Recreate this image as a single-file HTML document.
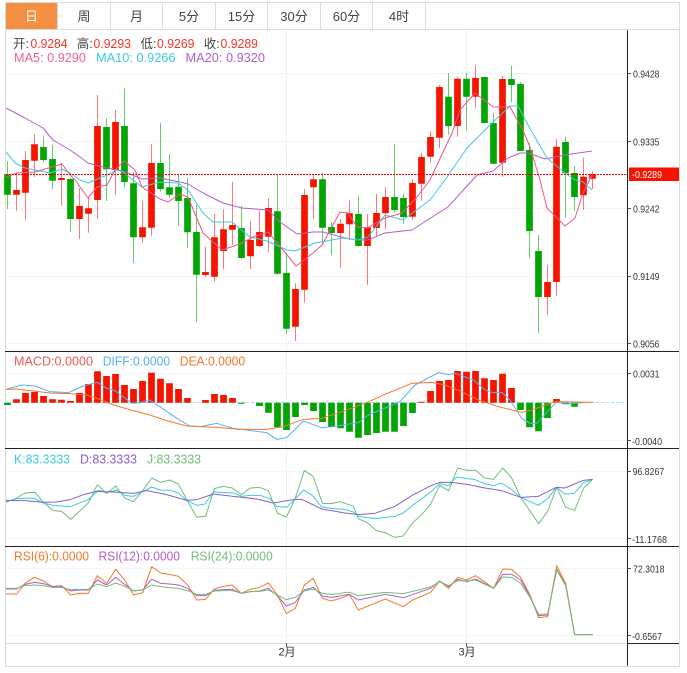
<!DOCTYPE html>
<html><head><meta charset="utf-8"><style>
html,body{margin:0;padding:0;background:#fff;width:687px;height:673px;overflow:hidden}
svg{display:block}
text{font-family:"Liberation Sans","Noto Sans CJK SC",sans-serif}
.t{font-size:13px;fill:#444;text-anchor:middle}
.a{font-size:10.5px;fill:#333}
</style></head><body>
<svg width="687" height="673" viewBox="0 0 687 673" xmlns="http://www.w3.org/2000/svg">
<rect width="687" height="673" fill="#fff"/>
<!-- grid -->
<g fill="none" stroke-width="1">
<path stroke="#edf2f5" d="M6 73.5H628M6 141.5H628M6 208.5H628M6 276.5H628M6 343.5H628M286.5 30V643M466.5 30V643"/>
<path stroke="#f4f6f8" d="M6 373.5H628M6 440.5H628M6 471.5H628M6 538.5H628M6 568.5H628M6 635.5H628"/>
</g>
<!-- tab bar -->
<rect x="6" y="3" width="51.5" height="26" fill="#f58f42"/>
<path fill="none" stroke="#dcdcdc" stroke-width="1" d="M5.5 2.5H679.5V666.5H5.5ZM5.5 29.5H679.5M57.5 3V29M110.5 3V29M162.5 3V29M215.5 3V29M267.5 3V29M320.5 3V29M372.5 3V29M425.5 3V29M6 643.5H628"/>
<text class="t" x="31.5" y="21" style="fill:#fff">日</text>
<text class="t" x="84" y="21">周</text>
<text class="t" x="136.5" y="21">月</text>
<text class="t" x="189" y="21">5分</text>
<text class="t" x="241.5" y="21">15分</text>
<text class="t" x="294" y="21">30分</text>
<text class="t" x="346.5" y="21">60分</text>
<text class="t" x="399" y="21">4时</text>
<!-- wicks -->
<g fill="none" stroke-width="1">
<path stroke="#f77" d="M16.5 172V211M25.5 151V220M34.5 134V177M61.5 163V205.7M79.5 188V239M88.5 197V232.7M97.5 95V219M115.5 110V195M142.5 201V242.7M151.5 144.3V235.7M205.5 246.7V277.3M214.5 214V281.7M223.5 209.3V269M232.5 181.7V245M250.5 221V269.3M259.5 210.7V247M268.5 198.3V252M295.5 283.3V341M304.5 189V302.7M313.5 174V219M340.5 219V267.7M349.5 200.7V240M367.5 214.3V285M376.5 194V236.7M385.5 187.3V229M412.5 179.3V220M421.5 153.3V200.7M430.5 131.3V163M439.5 85V148.3M457.5 77V136.7M475.5 65V108M502.5 76V176.7M547.5 265V315M556.5 139V295.7M583.5 157.7V210M592.5 171.3V189"/>
<path stroke="#6c6" d="M7.5 161V209M43.5 136.7V162M52.5 145V189M70.5 178V232M106.5 118V200.7M124.5 88V187.7M133.5 172V262.7M160.5 123V191.7M169.5 154V197.7M178.5 175V226M187.5 178V248M196.5 205V322.3M241.5 206V259.3M277.5 175V275M286.5 252.7V334M322.5 173V245M331.5 221.7V255M358.5 196V247M394.5 144V213M403.5 194V224M448.5 73V134.7M466.5 73V130M493.5 113V163.7M511.5 65.7V102M520.5 82V151M529.5 143.3V257.7M538.5 235V333M565.5 136.7V217.7M574.5 166V210.7"/>
</g>
<!-- bodies -->
<g fill="none" stroke-width="6.7">
<path stroke="#f51400" d="M16.5 190V194.7M25.5 160V192.7M34.5 144.3V160.7M61.5 178V180M79.5 206V219M88.5 208.3V213.7M97.5 126V200M115.5 122V170M142.5 227.3V237.3M151.5 163V227.7M205.5 272V275M214.5 237.3V276.7M223.5 229.3V251M232.5 225V229.7M250.5 240V256.3M259.5 232V246M268.5 208V236.7M295.5 289V326.7M304.5 195V289.7M313.5 179.3V187.3M340.5 223.7V233M349.5 213.3V224.3M367.5 227.3V246M376.5 213V228M385.5 197V213.3M412.5 183V216.7M421.5 157V183.7M430.5 137V156.7M439.5 87V137.7M457.5 78.7V126M475.5 78V96.7M502.5 79V162.7M547.5 282V297M556.5 146.7V282M583.5 176.7V195.3M592.5 174V178.7"/>
<path stroke="#03a503" d="M7.5 174.3V194.7M43.5 147V160M52.5 159V180.7M70.5 179V219M106.5 127V169.3M124.5 126V182M133.5 183.3V237.3M160.5 163V189M169.5 187.3V194.7M178.5 186.7V201M187.5 198V232.3M196.5 232V274.7M241.5 228V258M277.5 211.3V273.7M286.5 273V328.7M322.5 179.3V227.7M331.5 227V233M358.5 214V246M394.5 197V210M403.5 198V217M448.5 96.7V126M466.5 78.7V96.7M484.5 77V123M493.5 123V163.7M511.5 79V85M520.5 84V151M529.5 150V231M538.5 251V297M565.5 142V173.3M574.5 173V197"/>
</g>
<!-- MA lines -->
<g fill="none" stroke-width="1" stroke-linejoin="round">
<polyline stroke="#b45ec8" points="6,108 25,118 43,128 53,140 70,150 80,157 88,163 107,168 123,171 137,177 142,179 160,178 180,182 188,184 203,193 223,203 242,208 268,210 280,222 297,234 313,232 323,232 345,238 358,240 368,240 385,233 412,230 440,212 448,207 477,175 493,171 508,158 520,153 528,153 545,159 565,155 592,151"/>
<polyline stroke="#3ccbdf" points="6,152 15,163 25,168 35,170 50,173 62,169 70,173 80,180 88,183 107,175 117,170 123,172 142,187 160,182 178,183 188,190 203,213 213,222 232,222 250,237 267,241 287,250 295,251 315,243 343,238 358,240 368,237 385,215 403,220 430,200 445,180 467,148 492,123 510,106 518,106 528,125 547,158 565,173 575,180 583,182 592,190"/>
<polyline stroke="#f0548e" points="6,177 17,173 35,172 62,164 70,175 75,180 88,198 97,187 107,185 115,170 124,161 135,170 142,187 160,199 168,202 180,194 188,197 203,233 222,250 240,244 253,237 268,232 283,250 296,266 313,253 322,245 340,212 348,213 357,227 367,228 385,218 402,213 417,197 430,180 452,133 460,110 475,93 493,107 510,107 522,128 530,147 540,180 547,208 565,226 575,218 583,193 592,175"/>
</g>
<path stroke="#f00" stroke-width="1" stroke-dasharray="2 1" fill="none" d="M6 174.5H628"/>
<!-- MACD bars -->
<path fill="none" stroke="#a6dcf0" stroke-width="1" stroke-dasharray="3 2" d="M6 402.5H625"/>
<g fill="none" stroke-width="6.7">
<path stroke="#f51400" d="M16.5 402.7V399.3M25.5 402.7V393M34.5 402.7V392M43.5 402.7V396M52.5 402.7V399.3M61.5 402.7V399.7M70.5 402.7V401M79.5 402.7V393M88.5 402.7V384M97.5 402.7V371.3M106.5 402.7V376M115.5 402.7V374M124.5 402.7V385M133.5 402.7V389M142.5 402.7V381M151.5 402.7V372.7M160.5 402.7V378.7M169.5 402.7V383.3M178.5 402.7V389M187.5 402.7V398M205.5 402.7V400M214.5 402.7V394M223.5 402.7V395M232.5 402.7V398M421.5 402.7V401.7M430.5 402.7V391M439.5 402.7V381M448.5 402.7V380M457.5 402.7V371M466.5 402.7V371.7M475.5 402.7V371M484.5 402.7V378.3M493.5 402.7V380M502.5 402.7V373.7M511.5 402.7V388M556.5 402.7V399"/>
<path stroke="#03a503" d="M7.5 402.7V405M241.5 402.7V403.7M268.5 402.7V412.7M259.5 402.7V406M277.5 402.7V427.3M286.5 402.7V430M295.5 402.7V417M304.5 402.7V405M313.5 402.7V411M322.5 402.7V422M331.5 402.7V426.7M340.5 402.7V428.3M349.5 402.7V431.7M358.5 402.7V437.7M367.5 402.7V435M376.5 402.7V433M385.5 402.7V431.7M394.5 402.7V431.7M403.5 402.7V426M412.5 402.7V413M520.5 402.7V410M529.5 402.7V427.3M538.5 402.7V431.3M547.5 402.7V418M565.5 402.7V404.3M574.5 402.7V406.7"/>
</g>
<!-- MACD lines -->
<g transform="translate(0,350) scale(.33333)" fill="none" stroke-width="3" stroke-linejoin="round">
<polyline stroke="#58aef5" points="18,118 65,105 105,108 150,125 205,128 250,108 292,97 320,115 345,122 395,160 420,158 450,150 480,170 530,205 570,228 600,230 650,220 700,235 740,240 800,248 830,268 860,263 910,213 965,233 1000,230 1035,224"/>
<polyline stroke="#f5772b" points="18,118 50,117 100,123 150,129 210,131 260,135 300,148 340,165 400,182 450,195 500,212 560,228 650,232 720,238 800,238 850,230 910,208 965,205 1035,182"/>
</g>
<g transform="translate(345,350) scale(.33333)" fill="none" stroke-width="3" stroke-linejoin="round">
<polyline stroke="#58aef5" points="0,224 40,218 70,195 130,170 165,155 210,105 280,68 310,74 330,70 385,90 420,120 445,128 470,127 495,150 530,205 555,220 575,220 635,155 660,162 715,158"/>
<polyline stroke="#f5772b" points="0,182 60,160 120,133 200,100 260,97 300,105 350,125 400,150 460,170 530,187 560,180 630,155 745,157"/>
</g>
<!-- KDJ -->
<g transform="translate(0,448) scale(.33333)" fill="none" stroke-width="3" stroke-linejoin="round">
<polyline stroke="#6fbf73" points="18,163 50,150 75,135 105,133 130,163 160,188 185,190 212,214 265,165 292,110 320,137 347,114 374,150 400,161 428,128 455,90 482,103 510,96 535,108 563,160 590,207 617,205 643,122 670,115 697,120 724,140 751,120 778,118 805,128 832,195 859,208 886,150 913,67 940,86 967,166 994,167 1021,161 1035,166"/>
<polyline stroke="#3ccbdf" points="18,160 50,152 100,150 130,165 160,172 210,176 265,155 295,127 320,133 350,127 375,142 400,145 430,130 455,117 480,126 510,127 535,135 560,157 590,172 615,168 640,132 700,135 725,145 750,142 780,142 810,152 830,175 860,178 885,153 912,126 940,145 965,177 1000,182 1035,184"/>
<polyline stroke="#8a5fc8" points="18,157 75,158 130,163 170,162 210,155 250,140 290,130 340,132 400,136 440,128 500,140 560,157 590,155 640,138 700,145 770,153 820,165 880,155 905,154 965,183 1035,195"/>
</g>
<g transform="translate(345,448) scale(.33333)" fill="none" stroke-width="3" stroke-linejoin="round">
<polyline stroke="#6fbf73" points="0,166 25,175 40,212 67,224 94,248 121,254 148,268 175,264 202,225 230,200 257,168 284,112 311,128 338,60 365,67 392,67 419,90 446,94 473,60 500,90 527,148 581,227 608,190 635,118 662,178 689,187 716,120 743,94"/>
<polyline stroke="#3ccbdf" points="0,184 25,192 40,205 90,212 150,205 175,195 205,170 260,130 283,107 310,113 335,87 390,95 420,107 445,113 470,105 500,125 527,148 580,172 608,152 634,118 660,138 688,136 715,105 743,94"/>
<polyline stroke="#8a5fc8" points="0,195 40,200 90,196 150,175 205,140 260,112 285,103 320,103 370,110 420,120 470,128 527,148 580,145 634,118 660,120 715,97 743,94"/>
</g>
<!-- RSI -->
<g transform="translate(0,545) scale(.33333)" fill="none" stroke-width="3" stroke-linejoin="round">
<polyline stroke="#f5772b" points="18,147 50,147 75,115 103,97 130,108 157,125 185,122 212,150 238,145 265,145 292,92 320,115 347,73 374,105 401,150 428,143 455,65 482,84 509,88 536,94 563,120 590,165 617,163 643,132 670,124 697,120 724,145 751,133 778,128 805,113 832,150 859,206 886,190 913,120 940,100 967,160 994,168 1021,160 1035,155"/>
<polyline stroke="#b45ec8" points="18,132 50,132 75,118 103,112 130,116 157,124 185,124 212,138 238,135 265,135 292,105 320,120 347,97 374,118 401,138 428,135 455,103 482,115 509,117 536,120 563,130 590,152 617,152 643,136 670,134 697,133 724,145 751,140 778,138 805,130 832,152 859,183 886,172 913,135 940,127 967,153 994,157 1021,153 1035,150"/>
<polyline stroke="#6fbf73" points="18,130 50,130 75,122 103,120 130,122 157,127 185,127 212,134 238,133 265,133 292,117 320,125 347,114 374,124 401,137 428,135 455,120 482,125 509,128 536,130 563,137 590,148 617,148 643,138 670,137 697,137 724,145 751,140 778,139 805,135 832,150 859,164 886,157 913,138 940,132 967,145 994,148 1021,146 1035,142"/>
</g>
<g transform="translate(345,545) scale(.33333)" fill="none" stroke-width="3" stroke-linejoin="round">
<polyline stroke="#f5772b" points="0,155 13,148 40,195 121,162 175,185 203,165 257,142 284,108 311,130 338,97 365,105 392,92 446,130 473,72 500,73 527,97 554,148 581,218 608,215 635,62 662,115 689,269 743,269"/>
<polyline stroke="#b45ec8" points="0,150 13,148 40,165 121,148 175,158 257,130 284,108 311,125 338,103 365,110 392,102 446,130 473,88 500,88 527,105 554,152 581,212 608,210 635,72 662,120 689,269 743,269"/>
<polyline stroke="#6fbf73" points="0,142 13,142 40,152 121,142 175,146 257,126 284,110 311,122 338,107 365,108 392,105 446,130 473,96 500,97 527,115 554,155 581,208 608,207 635,75 662,122 689,269 743,269"/>
</g>
<!-- separators and axis -->
<path fill="none" stroke="#222" stroke-width="1" d="M5 351.5H679M5 448.5H679M5 546.5H679M628 643.5H679M627.5 30V666"/>
<path fill="none" stroke="#555" stroke-width="1" d="M628 73.5H631M628 141.5H631M628 208.5H631M628 276.5H631M628 343.5H631M628 373.5H631M628 440.5H631M628 471.5H631M628 538.5H631M628 568.5H631M628 635.5H631M286.5 643V647M466.5 643V647"/>
<!-- price label -->
<rect x="629" y="167.5" width="50" height="13.5" fill="#f51400"/>
<text x="632" y="178.2" fill="#fff" textLength="30" lengthAdjust="spacingAndGlyphs" style="font-size:10.5px">-0.9289</text>
<!-- axis labels -->
<text class="a" x="633" y="77.3" textLength="26.5" lengthAdjust="spacingAndGlyphs">0.9428</text>
<text class="a" x="633" y="145.3" textLength="26.5" lengthAdjust="spacingAndGlyphs">0.9335</text>
<text class="a" x="633" y="212.3" textLength="26.5" lengthAdjust="spacingAndGlyphs">0.9242</text>
<text class="a" x="633" y="279.8" textLength="26.5" lengthAdjust="spacingAndGlyphs">0.9149</text>
<text class="a" x="633" y="347.3" textLength="26.5" lengthAdjust="spacingAndGlyphs">0.9056</text>
<text class="a" x="633" y="377.3" textLength="26.5" lengthAdjust="spacingAndGlyphs">0.0031</text>
<text class="a" x="632" y="444.8" textLength="30" lengthAdjust="spacingAndGlyphs">-0.0040</text>
<text class="a" x="632.7" y="474.8" textLength="31.5" lengthAdjust="spacingAndGlyphs">96.8267</text>
<text class="a" x="632" y="542.8" textLength="35" lengthAdjust="spacingAndGlyphs">-11.1768</text>
<text class="a" x="633" y="572.3" textLength="31.5" lengthAdjust="spacingAndGlyphs">72.3018</text>
<text class="a" x="632" y="639.8" textLength="30" lengthAdjust="spacingAndGlyphs">-0.6567</text>
<text x="287" y="655.5" text-anchor="middle" style="font-size:11px;fill:#333">2月</text>
<text x="467" y="655.5" text-anchor="middle" style="font-size:11px;fill:#333">3月</text>
<!-- legend -->
<g style="font-size:13px">
<text x="13" y="48" fill="#444" style="font-size:12.5px">开:</text>
<text x="30.5" y="48" fill="#f5352a" textLength="37" lengthAdjust="spacingAndGlyphs">0.9284</text>
<text x="76.7" y="48" fill="#444" style="font-size:12.5px">高:</text>
<text x="93.5" y="48" fill="#f5352a" textLength="37.5" lengthAdjust="spacingAndGlyphs">0.9293</text>
<text x="140.5" y="48" fill="#444" style="font-size:12.5px">低:</text>
<text x="157" y="48" fill="#f5352a" textLength="37.5" lengthAdjust="spacingAndGlyphs">0.9269</text>
<text x="203.7" y="48" fill="#444" style="font-size:12.5px">收:</text>
<text x="220.5" y="48" fill="#f5352a" textLength="37.5" lengthAdjust="spacingAndGlyphs">0.9289</text>
<text x="14" y="62" fill="#f0609a" textLength="72" lengthAdjust="spacingAndGlyphs">MA5: 0.9290</text>
<text x="96" y="62" fill="#3ccbdf" textLength="79.5" lengthAdjust="spacingAndGlyphs">MA10: 0.9266</text>
<text x="185.5" y="62" fill="#b45ec8" textLength="79.5" lengthAdjust="spacingAndGlyphs">MA20: 0.9320</text>
<text x="14" y="365.5" fill="#f25a55" textLength="79" lengthAdjust="spacingAndGlyphs">MACD:0.0000</text>
<text x="102.7" y="365.5" fill="#58aef5" textLength="67.5" lengthAdjust="spacingAndGlyphs">DIFF:0.0000</text>
<text x="179.7" y="365.5" fill="#f5772b" textLength="65.5" lengthAdjust="spacingAndGlyphs">DEA:0.0000</text>
<text x="14" y="463.5" fill="#3ccbdf" textLength="56" lengthAdjust="spacingAndGlyphs">K:83.3333</text>
<text x="80" y="463.5" fill="#8a5fc8" textLength="57" lengthAdjust="spacingAndGlyphs">D:83.3333</text>
<text x="147" y="463.5" fill="#6fbf73" textLength="54" lengthAdjust="spacingAndGlyphs">J:83.3333</text>
<text x="14" y="560.5" fill="#f5772b" textLength="75" lengthAdjust="spacingAndGlyphs">RSI(6):0.0000</text>
<text x="98.5" y="560.5" fill="#b45ec8" textLength="81.5" lengthAdjust="spacingAndGlyphs">RSI(12):0.0000</text>
<text x="190.7" y="560.5" fill="#6fbf73" textLength="82" lengthAdjust="spacingAndGlyphs">RSI(24):0.0000</text>
</g>
</svg>
</body></html>
